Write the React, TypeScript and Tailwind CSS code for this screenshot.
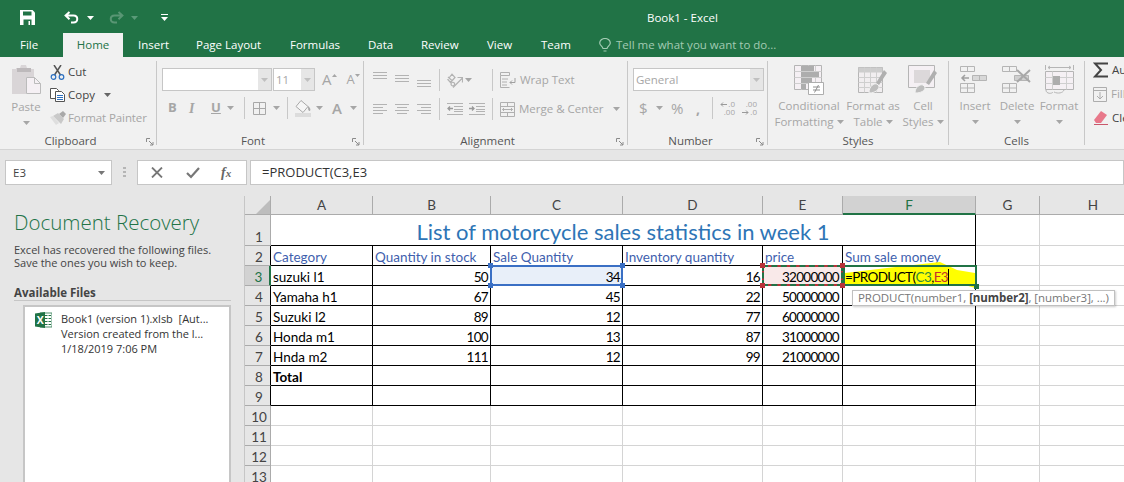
import type { ReactNode } from 'react'

const UI = "font-['Open_Sans',sans-serif]"
const CELL = "font-['Lato',sans-serif]"

function Caret({ color = '#a6a6a6', className = '' }: { color?: string; className?: string }) {
  return (
    <svg width="7" height="4" viewBox="0 0 7 4" className={`shrink-0 ${className}`}>
      <path d="M0 0h7L3.5 4z" fill={color} />
    </svg>
  )
}

function Launcher({ className }: { className: string }) {
  return (
    <svg width="8" height="8" viewBox="0 0 8 8" className={`absolute ${className}`} fill="none" stroke="#8a8a8a">
      <path d="M.5 4V.5H4M3 3l4 4M7 4v3H4" />
    </svg>
  )
}

function Group({ width, label, labelClass = '', children }: { width: string; label: string; labelClass?: string; children: ReactNode }) {
  return (
    <div className={`relative flex h-[84px] shrink-0 flex-col border-r border-[#c8c8c8] ${width}`}>
      <div className="h-[72px] shrink-0">{children}</div>
      <div className={`h-4 shrink-0 text-center text-[11.5px] leading-4 text-[#555] ${labelClass}`}>{label}</div>
    </div>
  )
}

function Lines({ rows, w = 15, h = 12 }: { rows: [number, number, number][]; w?: number; h?: number }) {
  return (
    <svg width={w} height={h} viewBox={`0 0 ${w} ${h}`} stroke="#b3b3b3" className="shrink-0">
      {rows.map((r, i) => (
        <path key={i} d={`M${r[0]} ${r[2] + 0.5}H${r[1]}`} />
      ))}
    </svg>
  )
}

function VSep({ className = '' }: { className?: string }) {
  return <div className={`h-[22px] w-px shrink-0 bg-[#c8c8c8] ${className}`} />
}

function SaveIcon() {
  return (
    <svg width="15" height="15" viewBox="0 0 15 15">
      <path d="M0 0h12.5L15 2.5V15H0z" fill="#fff" />
      <path d="M3 1.5h8.5v4H3zM3.5 9.5h8V15h-8z" fill="#217346" />
      <path d="M8.5 11h1.5v4H8.5z" fill="#fff" />
    </svg>
  )
}

function UndoIcon({ color, opacity = 1 }: { color: string; opacity?: number }) {
  return (
    <svg width="15" height="13" viewBox="0 0 15 13" fill="none" stroke={color} strokeWidth="2" opacity={opacity}>
      <path d="M5.5 1L1.6 4.6l3.9 3.6M2 4.6h7.5c5 0 5 7 0 7H7" />
    </svg>
  )
}

function PasteIcon() {
  return (
    <svg width="29" height="31" viewBox="0 0 29 31">
      <path d="M0 4h4v-1h4l1-3h5l1 3h4v1h3v8H14v17H0z" fill="#d9d5d7" />
      <path d="M5 3h14v4H5z" fill="#bdb9bb" />
      <path d="M14.500 12.500h8l6 6v10h-14z" fill="#f5f0f4" stroke="#bbb" />
      <path d="M22.500 12.500v6h6" fill="none" stroke="#bbb" />
    </svg>
  )
}

function ScissorsIcon() {
  return (
    <svg width="15" height="15" viewBox="0 0 15 15" fill="none">
      <path d="M4 0l6.500 10M11 0L4.500 10" stroke="#555" strokeWidth="1.500" />
      <circle cx="3.500" cy="12" r="2.300" stroke="#2b6fc0" strokeWidth="1.200" />
      <circle cx="11.500" cy="12" r="2.300" stroke="#2b6fc0" strokeWidth="1.200" />
    </svg>
  )
}

function CopyIcon() {
  return (
    <svg width="15" height="14" viewBox="0 0 15 14" fill="#fff" stroke="#555">
      <path d="M.5.500h6l2 2v8h-8z" />
      <path d="M5.500 3.500h6l3 3v7h-9z" />
      <path d="M7 7.500h6M7 9.500h6M7 11.500h6" stroke="#2b6fc0" />
    </svg>
  )
}

function BrushIcon() {
  return (
    <svg width="16" height="14" viewBox="0 0 16 14">
      <path d="M9 3l4-3 3 3-3 4z" fill="#a9a9a9" />
      <path d="M3 5l5-3 6 6-3 5z" fill="#c9c9c9" />
      <path d="M0 6l3-1 6 7-3 2z" fill="#dedede" />
    </svg>
  )
}

function BordersIcon() {
  return (
    <svg width="13" height="13" viewBox="0 0 13 13" fill="none" stroke="#a8a8a8">
      <path d="M.5.500h12v12H.5zM6.500.5v12M.5 6.500h12" />
    </svg>
  )
}

function FillIcon() {
  return (
    <svg width="16" height="17" viewBox="0 0 16 17">
      <path d="M6 .5l7 6-5 6-7-6z" fill="#f6f6f6" stroke="#a8a8a8" />
      <path d="M13 6c2 2 3 3 2 5-2 0-2-2-2-5z" fill="#a8a8a8" />
      <path d="M0 13h16v4H0z" fill="#dcdcdc" />
    </svg>
  )
}

function OrientIcon() {
  return (
    <svg width="16" height="15" viewBox="0 0 16 15" fill="none" stroke="#b3b3b3" strokeWidth="1.200">
      <path d="M.8 6.500L5 1.200 8 4.500 3.500 9.500zM1 4l4.500 4" />
      <path d="M5 9.500a1.800 1.800 0 1 0 2.500 2.300A1.800 1.800 0 0 0 5 9.500z" />
      <path d="M6 14.500L15.500 5M10.500 4.500h5v5" />
    </svg>
  )
}

function WrapIcon() {
  return (
    <svg width="16" height="16" viewBox="0 0 16 16" fill="none" stroke="#b0b0b0">
      <path d="M.5.500h9v3h-9zM.5 3.500v12h9M2 7h6M2 10h5M2 13h5" />
      <path d="M15 6v4.500H10M12 8.500l-2 2 2 2" stroke="#a0a0a0" />
    </svg>
  )
}

function MergeIcon() {
  return (
    <svg width="15" height="15" viewBox="0 0 15 15" fill="none" stroke="#b0b0b0">
      <path d="M.5.500h14v14H.5zM.5 4.500h14M.5 10.500h14M7.500.5v4M7.500 10.500v4" />
      <path d="M2.500 7.500h10M4 6l-1.500 1.500L4 9M11 6l1.500 1.500L11 9" />
    </svg>
  )
}

function IndentIcon({ flip }: { flip?: boolean }) {
  return (
    <svg width="16" height="12" viewBox="0 0 16 12" stroke="#b3b3b3" fill="none">
      <path d="M0 .5h16M7 3.500h9M7 6.500h9M7 8.500h9M0 11.500h16" />
      <path d={flip ? 'M0 5.500h5M3 3.500l2 2-2 2' : 'M1 5.500h5M3 3.500l-2 2 2 2'} stroke="#9a9a9a" strokeWidth="1.300" />
    </svg>
  )
}

function DecimalArrow({ flip }: { flip?: boolean }) {
  return (
    <svg width="7" height="5" viewBox="0 0 7 5" fill="none" stroke="#9a9a9a" className="mr-px shrink-0">
      <path d={flip ? 'M0 2.500h6M4 .5l2 2-2 2' : 'M7 2.500H1M3 .5l-2 2 2 2'} />
    </svg>
  )
}

function CondIcon() {
  return (
    <svg width="30" height="30" viewBox="0 0 30 30" fill="none">
      <path d="M.5.500h27v24H.5z" fill="#f5f0f4" stroke="#b5b5b5" />
      <path d="M.5 6.500h27M.5 12.500h27M.5 18.500h27M7.500.5v24M14.500.5v24M21.500.5v24" stroke="#cfcfcf" />
      <path d="M7 1h13v5H7zM7 7h18v5H7zM7 13h11v5H7zM7 19h5v5H7z" fill="#adadad" />
      <path d="M14.500 17.500h15v12h-15z" fill="#fff" stroke="#adadad" />
      <path d="M19 22h7M19 25h7M24.500 20l-4 7.500" stroke="#8e8e8e" />
    </svg>
  )
}

function TableIcon() {
  return (
    <svg width="30" height="30" viewBox="0 0 30 30" fill="none">
      <path d="M.5 2.500h24v25H.5z" fill="#f1eef0" stroke="#b5b5b5" />
      <path d="M.5 2.500h24v5H.5z" fill="#cdcdcd" />
      <path d="M.5 12.500h24M.5 17.500h24M.5 22.500h24M6.500 2.500v25M12.500 2.500v25M18.500 2.500v25" stroke="#cfcfcf" />
      <path d="M29 8l-8 12-3-2 8-13z" fill="#b0b0b0" />
      <path d="M11 28c0-7 5-10 8-9l2 2c0 4-4 7-10 7z" fill="#bdbdbd" stroke="#f1f1f1" />
    </svg>
  )
}

function CellStyleIcon() {
  return (
    <svg width="30" height="30" viewBox="0 0 30 30" fill="none">
      <path d="M.5.500h26v22H.5z" fill="#f5f0f4" stroke="#b5b5b5" />
      <path d="M6 5h16v13H6z" fill="#dcd8da" />
      <path d="M29 8l-8 12-3-2 8-13z" fill="#b0b0b0" />
      <path d="M7 28c0-6 5-9 8-8l2 2c0 4-4 6-10 6z" fill="#bdbdbd" stroke="#f1f1f1" />
    </svg>
  )
}

function InsertIcon({ del }: { del?: boolean }) {
  return (
    <svg width="30" height="28" viewBox="0 0 30 28" fill="none" stroke="#b5b5b5">
      <path d="M.5.500h14v5H.5zM7.500.5v5M.5 17.500h14v9H.5zM.5 22h14M7.500 17.500v9" />
      <path d="M12.500 9.500h14v5h-14zM19.500 9.500v5" fill={del ? '#cfcfcf' : '#d8d8d8'} />
      {del ? (
        <path d="M15 4l13 12M28 4L15 16" stroke="#a8a8a8" strokeWidth="2" />
      ) : (
        <path d="M9 12H2M5 9l-3 3 3 3" stroke="#a0a0a0" strokeWidth="1.500" />
      )}
    </svg>
  )
}

function FormatIcon() {
  return (
    <svg width="29" height="30" viewBox="0 0 29 30" fill="none" stroke="#b5b5b5">
      <path d="M.5 0v5M28.500 0v5M3 2.500h23M5 1L3 2.500 5 4M24 1l2 1.500L24 4" />
      <path d="M.5 6.500h28v18H.5z" fill="#f5f0f4" />
      <path d="M.5 12.500h28M.5 18.500h28M7.500 6.500v18M21.500 6.500v18" stroke="#cfcfcf" />
      <path d="M8 11h7v9H8z" fill="#adadad" stroke="none" />
      <path d="M1 25c0 4 6 4 7 2M9 27c4 2 9 1 10-2" />
    </svg>
  )
}

function ExcelIcon() {
  return (
    <svg width="17" height="16" viewBox="0 0 17 16">
      <path d="M5 1h12v14H5z" fill="#fff" stroke="#217346" strokeWidth=".8" />
      <path d="M10 3.500h2.500M13.500 3.500H16M10 6.500h2.500M13.500 6.500H16M10 9.500h2.500M13.500 9.500H16M10 12.500h2.500M13.500 12.500H16" stroke="#217346" />
      <path d="M0 1.500L10 0v16L0 14.500z" fill="#217346" />
      <text x="1.700" y="12" fontSize="10.500" fontWeight="700" fill="#fff" fontFamily="Open Sans">X</text>
    </svg>
  )
}

function BigBtn({ width, children, l1, l2 }: { width: string; children: ReactNode; l1: string; l2?: string }) {
  return (
    <div className={`flex shrink-0 flex-col items-center pt-1 ${width}`}>
      <div className="flex h-[30px] items-center">{children}</div>
      <div className="mt-[3px] whitespace-nowrap text-[11.5px] leading-4 text-[#a6a6a6]">{l1}</div>
      {l2 ? (
        <div className="flex items-center gap-[3px] whitespace-nowrap text-[11.5px] leading-4 text-[#a6a6a6]">
          {l2}
          <Caret />
        </div>
      ) : (
        <Caret className="mt-[6px]" />
      )}
    </div>
  )
}

function Ribbon() {
  return (
    <div className="flex h-[93px] border-b border-[#d4d4d4] bg-[#f1f1f1] pt-1">
      <Group width="w-[157px]" label="Clipboard" labelClass="pr-[15px]">
        <div className="flex">
          <div className="ml-[11px] flex w-[30px] flex-col items-center pt-1">
            <PasteIcon />
            <div className="mt-[3px] text-[11.5px] leading-4 text-[#a6a6a6]">Paste</div>
            <Caret className="mt-[6px]" />
          </div>
          <div className="ml-[9px] flex flex-col gap-[5px] pt-[2px] text-[11.5px] leading-[18px] text-[#444]">
            <div className="flex items-center gap-[3px]"><ScissorsIcon />Cut</div>
            <div className="flex items-center gap-[3px]"><CopyIcon />Copy<Caret color="#666" className="ml-[6px]" /></div>
            <div className="flex items-center gap-[2px] tracking-[-0.1px] text-[#a6a6a6]"><BrushIcon />Format Painter</div>
          </div>
        </div>
        <Launcher className="left-[146px] top-[77px]" />
      </Group>
      <Group width="w-[207px]" label="Font" labelClass="pr-[14px]">
        <div className="flex items-center pl-[5px] pt-[7px]">
          <div className="flex h-[23px] w-[110px] border border-[#c6c6c6] bg-white">
            <div className="flex-1" />
            <div className="flex w-[13px] items-center justify-center bg-[#e6e6e6]"><Caret color="#c0c0c0" /></div>
          </div>
          <div className="ml-px flex h-[23px] w-[42px] items-center border border-[#c6c6c6] bg-white pl-[2px] text-[11.5px] text-[#a6a6a6]">
            <span className="flex-1">11</span>
            <div className="flex h-full w-[13px] items-center justify-center bg-[#e6e6e6]"><Caret color="#c0c0c0" /></div>
          </div>
          <span className="ml-[7px] text-[15px] text-[#a6a6a6]">A</span>
          <svg width="5" height="3" className="mb-[9px]"><path d="M0 3h5L2.500 0z" fill="#a6a6a6" /></svg>
          <span className="ml-[10px] text-[13px] text-[#a6a6a6]">A</span>
          <svg width="5" height="3" className="mb-[9px]"><path d="M0 0h5L2.500 3z" fill="#a6a6a6" /></svg>
        </div>
        <div className="mt-[6px] flex h-[22px] items-center pl-[11px] text-[#a6a6a6]">
          <span className="w-[21px] text-[13px] font-bold">B</span>
          <span className="w-[22px] font-['Liberation_Serif',serif] text-[14px] font-bold italic">I</span>
          <span className="w-[15px] text-[13px] font-bold underline">U</span>
          <Caret className="ml-[1px]" />
          <VSep className="ml-[10px]" />
          <span className="ml-[8px]"><BordersIcon /></span>
          <Caret className="ml-[7px]" />
          <VSep className="ml-[7px]" />
          <span className="ml-[7px]"><FillIcon /></span>
          <Caret className="ml-[5px]" />
          <span className="ml-[9px] text-[15px] font-semibold">A</span>
          <Caret className="ml-[8px]" />
        </div>
        <Launcher className="left-[195px] top-[77px]" />
      </Group>
      <Group width="w-[264px]" label="Alignment" labelClass="pr-[16px]">
        <div className="flex h-[36px] items-center pl-[9px] pt-[2px]">
          <div className="w-[22px] self-start pt-[9px]"><Lines rows={[[0, 14, 0], [0, 14, 3], [0, 14, 6]]} h={7} /></div>
          <div className="w-[22px] self-start pt-[12px]"><Lines rows={[[0, 14, 0], [0, 14, 3], [0, 14, 6]]} h={7} /></div>
          <div className="w-[22px] self-start pt-[17px]"><Lines rows={[[0, 14, 0], [0, 14, 3], [0, 14, 6]]} h={7} /></div>
          <VSep />
          <span className="ml-[7px]"><OrientIcon /></span>
          <Caret className="ml-[2px]" />
          <VSep className="ml-[20px]" />
          <span className="ml-[7px]"><WrapIcon /></span>
          <span className="ml-[4px] text-[11.5px] text-[#a6a6a6]">Wrap Text</span>
        </div>
        <div className="mt-[1px] flex h-[22px] items-center pl-[9px]">
          <div className="w-[22px]"><Lines rows={[[0, 14, 1], [0, 10, 4], [0, 14, 7], [0, 10, 10]]} /></div>
          <div className="w-[22px]"><Lines rows={[[0, 14, 1], [2, 12, 4], [0, 14, 7], [2, 12, 10]]} /></div>
          <div className="w-[22px]"><Lines rows={[[0, 14, 1], [4, 14, 4], [0, 14, 7], [4, 14, 10]]} /></div>
          <VSep />
          <span className="ml-[7px]"><IndentIcon /></span>
          <span className="ml-[6px]"><IndentIcon flip /></span>
          <VSep className="ml-[7px]" />
          <span className="ml-[7px]"><MergeIcon /></span>
          <span className="ml-[4px] text-[11.5px] text-[#a6a6a6]">Merge &amp; Center</span>
          <Caret className="ml-[9px]" />
        </div>
        <Launcher className="left-[252px] top-[77px]" />
      </Group>
      <Group width="w-[140px]" label="Number" labelClass="pr-[14px]">
        <div className="pl-[5px] pt-[7px]">
          <div className="flex h-[23px] w-[131px] items-center border border-[#c6c6c6] bg-white pl-[2px] text-[11.5px] text-[#a6a6a6]">
            <span className="flex-1">General</span>
            <div className="flex h-full w-[13px] items-center justify-center bg-[#e6e6e6]"><Caret color="#c0c0c0" /></div>
          </div>
        </div>
        <div className="mt-[6px] flex h-[22px] items-center pl-[11px] text-[#a6a6a6]">
          <span className="w-[9px] text-[15px]">$</span>
          <Caret className="ml-[8px]" />
          <span className="ml-[8px] w-[14px] text-[15px]">%</span>
          <span className="ml-[11px] w-[4px] text-[14px] font-bold">,</span>
          <VSep className="ml-[12px]" />
          <div className="ml-[7px] flex w-[15px] flex-col items-end text-[8px] leading-[8px]">
            <span className="flex items-center"><DecimalArrow />.0</span>
            <span>.00</span>
          </div>
          <div className="ml-[7px] flex w-[15px] flex-col items-end text-[8px] leading-[8px]">
            <span>.00</span>
            <span className="flex items-center"><DecimalArrow flip />.0</span>
          </div>
        </div>
        <Launcher className="left-[128px] top-[77px]" />
      </Group>
      <Group width="w-[181px]" label="Styles">
        <div className="flex pl-[8px]">
          <BigBtn width="w-[66px]" l1="Conditional" l2="Formatting"><CondIcon /></BigBtn>
          <BigBtn width="w-[62px]" l1="Format as" l2="Table"><TableIcon /></BigBtn>
          <BigBtn width="w-[38px]" l1="Cell" l2="Styles"><CellStyleIcon /></BigBtn>
        </div>
      </Group>
      <Group width="w-[136px]" label="Cells">
        <div className="flex pl-[5px]">
          <BigBtn width="w-[42px]" l1="Insert"><InsertIcon /></BigBtn>
          <BigBtn width="w-[42px]" l1="Delete"><InsertIcon del /></BigBtn>
          <BigBtn width="w-[42px]" l1="Format"><FormatIcon /></BigBtn>
        </div>
      </Group>
      <div className="flex flex-col gap-[6px] pl-[8px] text-[11.5px] leading-[18px]">
        <div className="flex items-center gap-[4px] text-[#444]">
          <svg width="15" height="16" viewBox="0 0 15 16" fill="none" stroke="#444" strokeWidth="2"><path d="M15 1.500H2L8 8l-6 6.500h13" /></svg>
          AutoSum
        </div>
        <div className="flex items-center gap-[4px] text-[#a6a6a6]">
          <svg width="14" height="15" viewBox="0 0 14 15" fill="none" stroke="#adadad"><path d="M.5.500h13v14H.5zM.5 3.500h13M7 5v7M4 9l3 3 3-3" /></svg>
          Fill
        </div>
        <div className="flex items-center gap-[4px] text-[#444]">
          <svg width="15" height="14" viewBox="0 0 15 14"><path d="M8 0l6 4-6 8H3L1 9z" fill="#e8788a" /><path d="M1 13.500h14" stroke="#c9586b" /></svg>
          Clear
        </div>
      </div>
    </div>
  )
}

function FormulaBar() {
  return (
    <div className="flex h-[25px] items-stretch pl-[5px] pr-0">
      <div className="flex w-[107px] items-center justify-between border border-[#c6c6c6] bg-white pl-[7px] pr-[6px] text-[11.5px] text-[#444]">
        E3
        <Caret color="#777" />
      </div>
      <div className="flex w-[25px] items-center justify-center">
        <svg width="3" height="11" fill="#b5b5b5"><path d="M0 0h3v2H0zM0 4h3v2H0zM0 8h3v2H0z" /></svg>
      </div>
      <div className="flex w-[110px] items-center border border-[#c6c6c6] bg-white">
        <svg width="12" height="11" viewBox="0 0 12 11" className="ml-[13px]" stroke="#777" strokeWidth="1.800"><path d="M1 .5l10 10M11 .5l-10 10" /></svg>
        <svg width="14" height="12" viewBox="0 0 14 12" className="ml-[23px]" fill="none" stroke="#777" strokeWidth="2.200"><path d="M1 6l4 4 8-9" /></svg>
        <span className="ml-[21px] font-['Liberation_Serif',serif] text-[14px] font-bold italic text-[#666]">f<span className="text-[11px]">x</span></span>
      </div>
      <div className="ml-[3px] flex flex-1 items-center border border-[#c6c6c6] bg-white pl-[11px] text-[13px] text-[#333]">=PRODUCT(C3,E3</div>
    </div>
  )
}

function RecoveryPane() {
  return (
    <div className="w-[244px] shrink-0 pl-[14px]">
      <div className="mt-[22px] text-[20.5px] font-light leading-[30px] text-[#217346]">Document Recovery</div>
      <div className="mt-[6px] text-[11px] leading-[13px] text-[#444]">
        <div>Excel has recovered the following files.</div>
        <div>Save the ones you wish to keep.</div>
      </div>
      <div className="mt-[16px] w-[217px] border-b border-[#c6c6c6] text-[11.5px] font-bold leading-[15px] text-[#444]">Available Files</div>
      <div className="ml-[9px] mt-[4px] flex h-[200px] w-[208px] border-2 border-[#c6c6c6] bg-white pl-[10px] pt-[5px]">
        <ExcelIcon />
        <div className="-mt-px ml-[9px] whitespace-nowrap text-[11px] leading-[15px] text-[#333]">
          <div>Book1 (version 1).xlsb&nbsp; [Aut...</div>
          <div>Version created from the l...</div>
          <div>1/18/2019 7:06 PM</div>
        </div>
      </div>
    </div>
  )
}

function Handle({ color, className }: { color: string; className: string }) {
  return <div className={`absolute z-20 h-[5px] w-[5px] ${color} ${className}`} />
}

const DATA: [string, number, number, number, number][] = [
  ['suzuki l1', 50, 34, 16, 32000000],
  ['Yamaha h1', 67, 45, 22, 50000000],
  ['Suzuki l2', 89, 12, 77, 60000000],
  ['Honda m1', 100, 13, 87, 31000000],
  ['Hnda m2', 111, 12, 99, 21000000],
]

const black = 'border-r border-b border-black'
const gray = 'border-r border-b border-[#d4d4d4]'
const textCell = `flex items-end overflow-visible whitespace-nowrap pl-[2px] leading-[15px] ${black}`
const numCell = `flex items-end justify-end whitespace-nowrap pr-[2px] leading-[15px] tracking-[-0.7px] ${black}`

function ColHead({ label, active }: { label: string; active?: boolean }) {
  return (
    <div
      className={`flex items-center justify-center border-r pt-px ${
        active
          ? 'border-b-2 border-r-[#ababab] border-b-[#217346] bg-[#d2d2d2] text-[#217346]'
          : 'border-b border-[#ababab] bg-[#e6e6e6] text-[#444]'
      }`}
    >
      {label}
    </div>
  )
}

function RowHead({ n, mark, active }: { n: number; mark?: boolean; active?: boolean }) {
  return (
    <div
      className={`flex items-end justify-center border-b border-r pl-[3px] leading-[15px] ${
        active
          ? 'border-b-[#ababab] border-r-2 border-r-[#217346] bg-[#d2d2d2] text-[#217346]'
          : `border-b-[#ababab] bg-[#e6e6e6] text-[#444] ${mark ? 'border-r-black' : 'border-r-[#ababab]'}`
      }`}
    >
      {n}
    </div>
  )
}

function Grey() {
  return (
    <>
      <div className={gray} />
      <div className={gray} />
    </>
  )
}

function Sheet() {
  return (
    <div className={`grid flex-1 grid-cols-[26px_102px_118px_132px_140px_80px_133px_64px_107px] grid-rows-[19px_31px_repeat(12,20px)] border-l border-[#c6c6c6] bg-white text-[13.5px] text-black ${CELL}`}>
      <div className="flex items-end justify-end border-b border-r border-[#ababab] bg-[#e6e6e6]">
        <svg width="16" height="15" viewBox="0 0 16 15"><path d="M16 1v14H2z" fill="#bdbdbd" /></svg>
      </div>
      {['A', 'B', 'C', 'D', 'E'].map((c) => (
        <ColHead key={c} label={c} />
      ))}
      <ColHead label="F" active />
      <ColHead label="G" />
      <ColHead label="H" />

      <RowHead n={1} />
      <div className="col-span-6 flex items-end justify-center border-b border-r border-black text-[22px] leading-[26px] text-[#2e75b6]">
        List of motorcycle sales statistics in week 1
      </div>
      <Grey />

      <RowHead n={2} mark />
      {['Category', 'Quantity in stock', 'Sale Quantity', 'Inventory quantity', 'price', 'Sum sale money'].map((t) => (
        <div key={t} className={`${textCell} text-[#3f5fae]`}>{t}</div>
      ))}
      <Grey />

      {DATA.map((row, i) => (
        <div key={row[0]} className="contents">
          <RowHead n={i + 3} mark={i > 0} active={i === 0} />
          <div className={textCell}>{row[0]}</div>
          <div className={numCell}>{row[1]}</div>
          <div className={`relative ${numCell} ${i === 0 ? 'bg-[#e8eff9]' : ''}`}>
            {i === 0 && (
              <>
                <div className="absolute -bottom-[1px] -left-[1px] -right-[1px] -top-[1px] z-10 border-2 border-[#3a6fc4]" />
                <Handle color="bg-[#3a6fc4]" className="-left-[3px] -top-[3px]" />
                <Handle color="bg-[#3a6fc4]" className="-right-[3px] -top-[3px]" />
                <Handle color="bg-[#3a6fc4]" className="-bottom-[3px] -left-[3px]" />
                <Handle color="bg-[#3a6fc4]" className="-bottom-[3px] -right-[3px]" />
              </>
            )}
            {row[2]}
          </div>
          <div className={numCell}>{row[3]}</div>
          <div className={`relative ${numCell} pr-[3px] ${i === 0 ? 'bg-[#f9e9e9]' : ''}`}>
            {i === 0 && (
              <>
                <div className="absolute -bottom-[1px] -left-[1px] -right-[1px] -top-[1px] z-10 border-2 border-[#b8333a]" />
                <div className="absolute -bottom-[1px] -left-[1px] -right-[1px] -top-[1px] z-10 border-2 border-dashed border-[#217346]" />
                <Handle color="bg-[#b8333a]" className="-left-[3px] -top-[3px]" />
                <Handle color="bg-[#b8333a]" className="-right-[3px] -top-[3px]" />
                <Handle color="bg-[#b8333a]" className="-bottom-[3px] -left-[3px]" />
                <Handle color="bg-[#b8333a]" className="-bottom-[3px] -right-[3px]" />
              </>
            )}
            {row[4]}
          </div>
          <div className={`relative ${black}`}>
            {i === 0 && (
              <>
                <svg width="134" height="28" viewBox="0 0 134 28" className="absolute -top-[5px] left-0 z-0">
                  <path d="M2 12L44 7 97 1l17 8 18 3v15l-10-3H2z" fill="#ffff00" />
                </svg>
                <div className="absolute -bottom-[1px] left-0 -right-[2px] -top-[1px] z-10 border-2 border-[#217346]" />
                <Handle color="bg-[#217346]" className="-bottom-[4px] -right-[4px]" />
                <div className="absolute bottom-0 left-[2px] z-10 flex items-end whitespace-nowrap leading-[15px] tracking-[-0.6px]">
                  =PRODUCT(<span className="text-[#2f8a3e]">C3</span>,<span className="text-[#c8322b]">E3</span>
                  <span className="h-[16px] w-px bg-black" />
                </div>
                <div className={`absolute left-[9px] top-[24px] z-30 whitespace-nowrap border border-[#c0c0c0] bg-white px-[5px] text-[11.5px] leading-[14px] tracking-[-0.06px] text-[#777] shadow-[1px_1px_2px_rgba(0,0,0,0.2)] ${UI}`}>
                  PRODUCT(number1, <b className="text-[#444]">[number2]</b>, [number3], ...)
                </div>
              </>
            )}
          </div>
          <Grey />
        </div>
      ))}

      <RowHead n={8} mark />
      <div className={`${textCell} font-bold`}>Total</div>
      {[0, 1, 2, 3, 4].map((k) => (
        <div key={k} className={black} />
      ))}
      <Grey />

      <RowHead n={9} mark />
      {[0, 1, 2, 3, 4, 5].map((k) => (
        <div key={k} className={black} />
      ))}
      <Grey />

      {[10, 11, 12, 13].map((n) => (
        <div key={n} className="contents">
          <RowHead n={n} />
          {[0, 1, 2, 3, 4, 5, 6, 7].map((k) => (
            <div key={k} className={gray} />
          ))}
        </div>
      ))}
    </div>
  )
}

export default function App() {
  return (
    <div className={`flex h-[482px] w-[1124px] flex-col overflow-hidden bg-[#e6e6e6] ${UI}`}>
      {/* Title bar and tabs */}
      <div className="h-[57px] shrink-0 bg-[#217346] text-white">
        <div className="flex h-[33px] items-center pl-5 pt-[2px]">
          <SaveIcon />
          <span className="ml-[29px]"><UndoIcon color="#fff" /></span>
          <Caret color="#fff" className="ml-[8px]" />
          <span className="ml-[15px]"><span className="inline-block -scale-x-100"><UndoIcon color="#fff" opacity={0.25} /></span></span>
          <Caret color="#5a9a78" className="ml-[7px]" />
          <div className="ml-[23px] flex flex-col items-center gap-[2px]">
            <div className="h-px w-[7px] bg-white" />
            <Caret color="#fff" />
          </div>
          <div className="ml-[479px] whitespace-nowrap text-[11.5px]">Book1 - Excel</div>
        </div>
        <div className="flex h-6 items-center text-[11.5px] leading-6">
          <span className="ml-5 w-[43px]">File</span>
          <span className="flex h-6 w-[60px] items-center justify-center bg-[#f1f1f1] text-[#217346]">Home</span>
          <span className="ml-[15px] w-[58px]">Insert</span>
          <span className="w-[94px]">Page Layout</span>
          <span className="w-[78px]">Formulas</span>
          <span className="w-[53px]">Data</span>
          <span className="w-[66px]">Review</span>
          <span className="w-[54px]">View</span>
          <span className="w-[58px]">Team</span>
          <svg width="12" height="15" viewBox="0 0 12 15" fill="none" stroke="#a3cbb3" strokeWidth="1.200">
            <path d="M4 10.500C3.500 8 .7 7.500.7 5a5.300 4.500 0 0 1 10.600 0c0 2.500-2.800 3-3.300 5.500zM4.500 13h3" />
          </svg>
          <span className="ml-[5px] whitespace-nowrap text-[#a3cbb3]">Tell me what you want to do...</span>
        </div>
      </div>

      <Ribbon />
      <div className="mt-[10px] shrink-0"><FormulaBar /></div>

      <div className="flex min-h-0 flex-1">
        <RecoveryPane />
        <div className="flex flex-1 flex-col pt-[11px]"><Sheet /></div>
      </div>
    </div>
  )
}
